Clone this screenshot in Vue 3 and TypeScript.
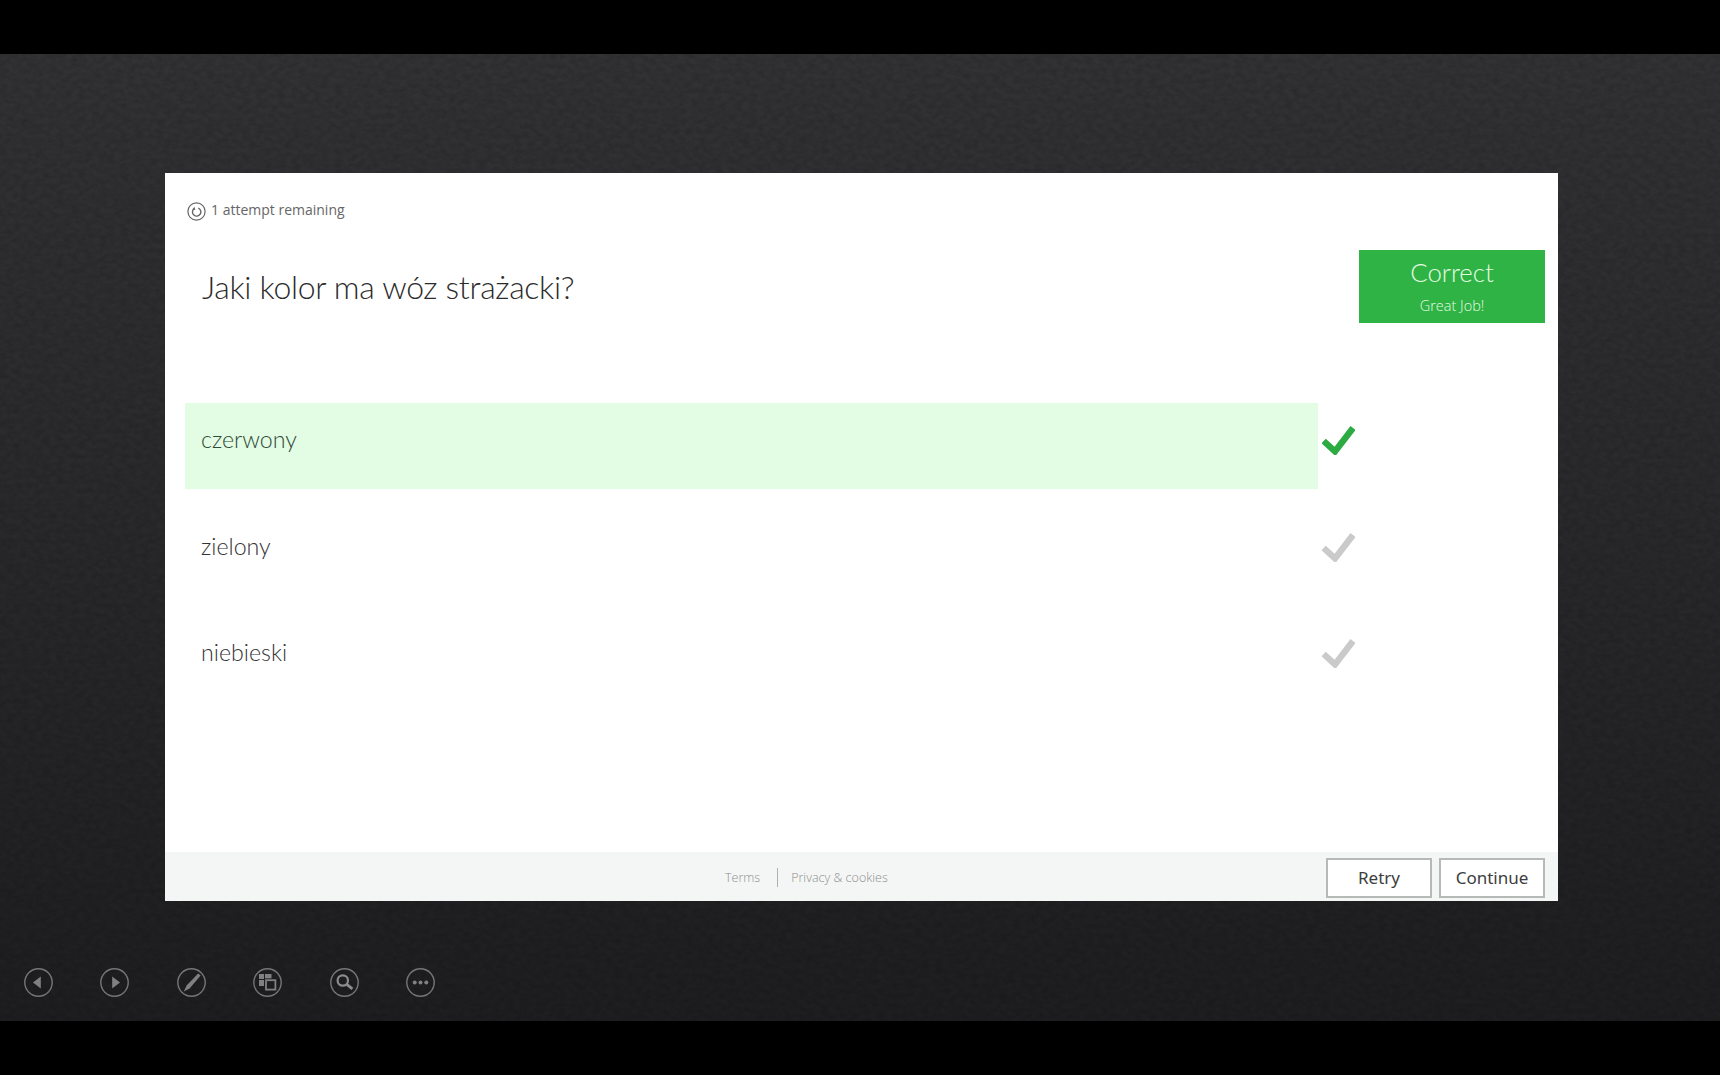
<script setup lang="ts">
interface Option {
  label: string
  correct: boolean
}
const options: Option[] = [
  { label: 'czerwony', correct: true },
  { label: 'zielony', correct: false },
  { label: 'niebieski', correct: false },
]
</script>

<template>
  <div class="page">
    <div class="bar"></div>
    <main class="stage">
      <svg class="texture" aria-hidden="true" width="1720" height="967">
        <filter id="paper" x="0" y="0" width="100%" height="100%">
          <feTurbulence type="fractalNoise" baseFrequency="0.14 0.2" numOctaves="4" seed="7" />
          <feColorMatrix type="matrix" values="0 0 0 0 0  0 0 0 0 0  0 0 0 0 0  1.6 0 0 0 -0.5" />
        </filter>
        <rect width="1720" height="967" filter="url(#paper)" opacity="0.16" />
      </svg>

      <section class="card">
        <div class="main">
          <div class="attempt">
            <svg class="attempt-icon" viewBox="0 0 19 19" width="19" height="19">
              <circle cx="9.5" cy="9.5" r="8.6" fill="none" stroke="#666" stroke-width="1.2" />
              <path d="M7 6.7 A4.2 4.2 0 1 0 11.3 6.1" fill="none" stroke="#666" stroke-width="1.4" />
              <path d="M7.6 4.8 L8.2 8 L5.2 7.4 Z" fill="#666" />
            </svg>
            <span>1 attempt remaining</span>
          </div>
          <div class="question-row">
            <h1 class="question">Jaki kolor ma wóz strażacki?</h1>
            <div class="result">
              <div class="result-title">Correct</div>
              <div class="result-sub">Great Job!</div>
            </div>
          </div>
          <ul class="options">
            <li v-for="o in options" :key="o.label" class="option">
              <div class="option-body" :class="{ right: o.correct }">{{ o.label }}</div>
              <svg class="tick" :class="{ good: o.correct }" viewBox="0 0 33 29" width="33" height="29">
                <path d="M1.6 15 L13 25.4 L31 2" fill="none" stroke="currentColor" stroke-width="6.4" />
              </svg>
            </li>
          </ul>
        </div>
        <footer class="footer">
          <nav class="links">
            <span class="link terms">Terms</span>
            <span class="link">Privacy &amp; cookies</span>
          </nav>
          <div class="actions">
            <button class="btn" type="button">Retry</button>
            <button class="btn" type="button">Continue</button>
          </div>
        </footer>
      </section>

      <div class="toolbar">
        <svg class="tool" viewBox="0 0 29 29"><circle class="ring" cx="14.5" cy="14.5" r="13.7" /><path class="solid" d="M9 14.5 L16.8 8.5 V20.5 Z" /></svg>
        <svg class="tool" viewBox="0 0 29 29"><circle class="ring" cx="14.5" cy="14.5" r="13.7" /><path class="solid" d="M20 14.5 L12.2 8.5 V20.5 Z" /></svg>
        <svg class="tool" viewBox="0 0 29 29"><circle class="ring" cx="14.5" cy="14.5" r="13.7" /><path class="solid" d="M21.2 5.6 L23.6 7.6 L12.6 20.4 L6.8 23.6 L9.6 17.6 Z" /></svg>
        <svg class="tool" viewBox="0 0 29 29">
          <circle class="ring" cx="14.5" cy="14.5" r="13.7" />
          <rect class="solid" x="6" y="6" width="5" height="5" />
          <rect class="solid" x="12" y="6" width="6.5" height="4.4" />
          <rect class="solid" x="6" y="12" width="5" height="6" />
          <rect class="outline" x="13" y="12.2" width="9.4" height="9.4" />
        </svg>
        <svg class="tool" viewBox="0 0 29 29">
          <circle class="ring" cx="14.5" cy="14.5" r="13.7" />
          <circle class="lens" cx="12.8" cy="12.5" r="5.2" />
          <path class="handle" d="M16.8 16.4 L22.4 20.8" />
        </svg>
        <svg class="tool" viewBox="0 0 29 29">
          <circle class="ring" cx="14.5" cy="14.5" r="13.7" />
          <circle class="solid" cx="8.7" cy="14.5" r="2" />
          <circle class="solid" cx="14.5" cy="14.5" r="2" />
          <circle class="solid" cx="20.3" cy="14.5" r="2" />
        </svg>
      </div>
    </main>
    <div class="bar bottom"></div>
  </div>
</template>

<style>
html,
body {
  margin: 0;
  background: #000;
}
</style>

<style scoped>
.page {
  width: 1720px;
  height: 1075px;
  display: flex;
  flex-direction: column;
  overflow: hidden;
  font-family: "Open Sans", "Noto Sans", sans-serif;
  background: #000;
}
.bar {
  height: 54px;
  background: #000;
  flex: none;
}
.bar.bottom {
  flex: 1;
}
.stage {
  position: relative;
  height: 967px;
  flex: none;
  padding-top: 119px;
  box-sizing: border-box;
  background: linear-gradient(180deg, #323234 0%, #2a2a2c 45%, #1e1e20 100%);
}
.texture {
  position: absolute;
  inset: 0;
}
.card {
  position: relative;
  margin-left: 165px;
  width: 1393px;
  height: 728px;
  background: #fff;
  display: flex;
  flex-direction: column;
}
.main {
  flex: 1;
}
.attempt {
  display: flex;
  align-items: center;
  gap: 5px;
  height: 19px;
  padding: 29px 0 0 22px;
  font-size: 14px;
  color: #666;
}
.attempt span {
  position: relative;
  top: -2px;
}
.attempt-icon {
  display: block;
}
.question-row {
  display: flex;
  align-items: center;
  justify-content: space-between;
  margin-top: 29px;
  padding: 0 13px 0 36px;
  height: 73px;
}
.question {
  margin: 0 0 0 1px;
  font-family: Lato, "Open Sans", sans-serif;
  font-size: 32px;
  letter-spacing: -0.32px;
  font-weight: 300;
  color: #2b2b2b;
  line-height: 44px;
}
.result {
  width: 186px;
  height: 73px;
  background: #2fb344;
  color: #e4fbe4;
  text-align: center;
  box-sizing: border-box;
  padding-top: 4px;
}
.result-title {
  font-family: Lato, "Open Sans", sans-serif;
  font-size: 25.8px;
  font-weight: 300;
  line-height: 36px;
}
.result-sub {
  font-size: 14.5px;
  font-weight: 300;
  line-height: 20px;
  margin-top: 6px;
}
.options {
  list-style: none;
  margin: 80px 0 0;
  padding: 0 0 0 20px;
  display: flex;
  flex-direction: column;
  gap: 20.5px;
}
.option {
  display: flex;
  align-items: flex-start;
  gap: 4px;
}
.option-body {
  width: 1133px;
  height: 86px;
  box-sizing: border-box;
  padding: 16px 0 0 16px;
  font-family: Lato, "Open Sans", sans-serif;
  font-size: 23.2px;
  font-weight: 300;
  line-height: 40px;
  color: #333;
}
.option-body.right {
  background: #e3fde5;
  color: #2f4a35;
}
.tick {
  margin-top: 23px;
  color: #cacaca;
}
.tick.good {
  color: #2bab42;
}
.footer {
  height: 49px;
  flex: none;
  background: #f4f6f5;
  display: flex;
  justify-content: space-between;
  padding: 6px 13px 3px 560px;
  box-sizing: border-box;
}
.links {
  display: flex;
  align-items: center;
  font-size: 12.5px;
  font-weight: 300;
  color: #8e8e8e;
  padding-top: 4px;
  height: 30px;
}
.link {
  white-space: nowrap;
}
.terms {
  padding-right: 16.5px;
  margin-right: 13.5px;
  border-right: 1px solid #b0b0b0;
  line-height: 19px;
}
.actions {
  display: flex;
  gap: 7px;
}
.btn {
  width: 106px;
  height: 40px;
  box-sizing: border-box;
  border: 2px solid #b7b9b8;
  background: #fff;
  color: #3d3d3d;
  font-family: "Noto Sans", "Open Sans", sans-serif;
  font-size: 17px;
  padding: 0 0 2px;
}
.toolbar {
  position: relative;
  display: flex;
  gap: 47.6px;
  padding-left: 23.5px;
  margin-top: 67px;
}
.tool {
  width: 29px;
  height: 29px;
  display: block;
}
.ring {
  fill: none;
  stroke: #767676;
  stroke-width: 1.4;
}
.solid {
  fill: #808080;
}
.outline {
  fill: none;
  stroke: #808080;
  stroke-width: 1.8;
}
.lens {
  fill: none;
  stroke: #8c8c8c;
  stroke-width: 2.2;
}
.handle {
  stroke: #8c8c8c;
  stroke-width: 2.8;
}
</style>
